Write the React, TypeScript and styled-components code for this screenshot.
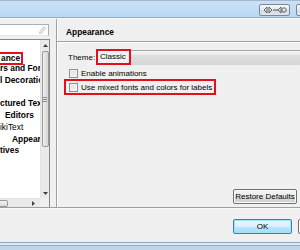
import React from "react";
import styled, { createGlobalStyle } from "styled-components";

const Global = createGlobalStyle`
  html, body { margin: 0; padding: 0; background: #f0f0f0; }
  body { font-family: "Liberation Sans", Arial, sans-serif; font-size: 8px; color: #000; }
`;

const Window = styled.div`
  width: 300px;
  height: 250px;
  overflow: hidden;
  display: flex;
  flex-direction: column;
  background: #f0f0f0;
`;

const TitleBar = styled.div`
  height: 18px;
  flex: none;
  border-top: 1px solid #a6b8cc;
  border-bottom: 1px solid #9aa9b9;
  background: linear-gradient(#c9e1f6, #bcd8f2);
  display: flex;
  justify-content: flex-end;
  align-items: flex-start;
  gap: 6px;
  padding-top: 3px;
  box-sizing: border-box;
  margin-right: -20px;
`;

const CaptionButton = styled.div<{ $w: number }>`
  width: ${(p) => p.$w}px;
  height: 12px;
  box-sizing: border-box;
  border: 1px solid #7d8894;
  border-radius: 2px;
  background: linear-gradient(#f4f7fa 0%, #e4eaf0 50%, #d3dbe4 51%, #dfe6ee 100%);
  display: flex;
  align-items: center;
  justify-content: center;
`;

const TitleGap = styled.div`
  height: 1px;
  flex: none;
  background: #f7f7f7;
`;

const Main = styled.div`
  height: 188px;
  flex: none;
  display: flex;
`;

const LeftPanel = styled.div`
  width: 50px;
  flex: none;
  margin-right: 6px;
  display: flex;
  flex-direction: column;
  padding-top: 5px;
  box-sizing: border-box;
`;

const FilterBox = styled.div`
  height: 12px;
  flex: none;
  box-sizing: border-box;
  border: 1px solid #abadb3;
  border-left: none;
  border-bottom-color: #e3e9ef;
  background: #fff;
  display: flex;
  justify-content: flex-end;
  align-items: center;
  padding-right: 2px;
  margin-right: 1px;
`;

const TreeBox = styled.div`
  flex: 1;
  margin-top: 3px;
  background: #fff;
  border-top: 1px solid #828790;
  border-right: 1px solid #828790;
  display: grid;
  grid-template-columns: 40px 9px;
  grid-template-rows: 1fr 9px;
  overflow: hidden;
`;

const TreeView = styled.div`
  overflow: hidden;
`;

const TreeRow = styled.div<{ $indent: number; $bold?: boolean }>`
  height: 11.7px;
  line-height: 11.7px;
  white-space: nowrap;
  padding-left: ${(p) => p.$indent}px;
  font-weight: ${(p) => (p.$bold === false ? 400 : 700)};
  font-size: 8.4px;
  color: #000;
`;

const Marked = styled.span`
  display: inline-block;
  box-sizing: border-box;
  height: 13px;
  line-height: 9px;
  border: 2px solid #e3101b;
  border-left: none;
  padding: 0 1px;
  vertical-align: top;
`;

const VScroll = styled.div`
  background: #eaeaea;
  border-left: 1px solid #e3e3e3;
  display: flex;
  flex-direction: column;
  align-items: center;
`;

const ArrowCell = styled.div`
  height: 10px;
  width: 100%;
  display: flex;
  align-items: center;
  justify-content: center;
  flex: none;
`;

const Thumb = styled.div<{ $h: number }>`
  height: ${(p) => p.$h}px;
  width: 7px;
  box-sizing: border-box;
  border: 1px solid #9a9a9a;
  border-radius: 2px;
  background: linear-gradient(90deg, #f3f3f3, #e2e2e2 50%, #d6d6d6);
  display: flex;
  align-items: center;
  justify-content: center;
  flex: none;
  margin-top: 1px;
`;

const Spacer = styled.div`
  flex: 1;
`;

const HScroll = styled.div`
  background: #eaeaea;
  border-top: 1px solid #e3e3e3;
  display: flex;
  align-items: center;
`;

const HThumb = styled.div`
  width: 8px;
  height: 7px;
  box-sizing: border-box;
  border: 1px solid #9a9a9a;
  border-left: none;
  border-radius: 0 2px 2px 0;
  background: linear-gradient(#f3f3f3, #d9d9d9);
`;

const Corner = styled.div`
  background: #f0f0f0;
`;

const RightPanel = styled.div`
  flex: 1;
  border-left: 1px solid #a0a0a0;
  box-shadow: inset 1px 0 #ffffff;
  display: flex;
  flex-direction: column;
`;

const Header = styled.div`
  height: 23px;
  flex: none;
  box-sizing: border-box;
  padding: 3px 0 0 9px;
  display: flex;
  align-items: center;
  font-weight: 700;
  font-size: 8.4px;
  border-bottom: 1px solid #a0a0a0;
`;

const HeaderShadow = styled.div`
  height: 1px;
  background: #ffffff;
  flex: none;
`;

const Content = styled.div`
  flex: 1;
  display: flex;
  flex-direction: column;
  padding-left: 7px;
`;

const ThemeRow = styled.div`
  margin-top: 6px;
  height: 16px;
  display: flex;
  align-items: center;
  padding-left: 4px;
`;

const ThemeLabel = styled.span`
  width: 28px;
  flex: none;
`;

const Combo = styled.div`
  flex: 1;
  height: 15px;
  margin-top: 1px;
  box-sizing: border-box;
  border-top: 1px solid #a8a8a8;
  background: linear-gradient(#f4f4f4 0%, #ececec 25%, #dfdfdf 30%, #d6d6d6 100%);
  margin-right: -4px;
  display: flex;
  align-items: flex-start;
`;

const ComboValue = styled.span`
  height: 16px;
  margin-top: -2px;
  box-sizing: border-box;
  border: 2px solid #e3101b;
  background: #f2f2f2;
  padding: 0 3px 0 2px;
  line-height: 12px;
  display: flex;
  align-items: center;
`;

const CheckRow = styled.div`
  height: 11px;
  margin-top: 3px;
  display: flex;
  align-items: center;
  padding-left: 5px;
  gap: 3px;
`;

const MarkedCheckRow = styled.div`
  height: 16px;
  width: fit-content;
  box-sizing: border-box;
  border: 2px solid #e3101b;
  display: flex;
  align-items: center;
  padding: 0 2px 0 3px;
  gap: 3px;
`;

const CheckBox = styled.span`
  width: 9px;
  height: 9px;
  box-sizing: border-box;
  border: 1px solid #8f8f8f;
  background: linear-gradient(135deg, #dcdcdc, #f6f6f6);
  box-shadow: inset 0 0 0 1px #f4f4f4;
  flex: none;
`;

const RestoreRow = styled.div`
  margin-top: auto;
  display: flex;
  justify-content: flex-end;
  padding: 0 3px 3px 0;
`;

const Button = styled.button<{ $w: number; $default?: boolean }>`
  width: ${(p) => p.$w}px;
  height: 15px;
  flex: none;
  box-sizing: border-box;
  padding: 0;
  font-family: "Liberation Sans", Arial, sans-serif;
  font-size: 8px;
  color: #000;
  border-radius: 2px;
  border: 1px solid ${(p) => (p.$default ? "#3c7fb1" : "#707070")};
  background: ${(p) =>
    p.$default
      ? "linear-gradient(#eaf6fd 0%, #d9f0fc 50%, #bee6fd 51%, #a7d9f5 100%)"
      : "linear-gradient(#f2f2f2 0%, #ebebeb 50%, #dddddd 51%, #cfcfcf 100%)"};
  box-shadow: inset 0 0 0 1px ${(p) => (p.$default ? "#a6e2f7" : "#fcfcfc")};
`;

const Separator = styled.div`
  height: 2px;
  flex: none;
  border-top: 1px solid #a0a0a0;
  box-sizing: border-box;
  background: #fafafa;
`;

const ButtonBar = styled.div`
  height: 33px;
  flex: none;
  display: flex;
  justify-content: flex-end;
  gap: 6px;
  padding-top: 10px;
  box-sizing: border-box;
  margin-right: -57px;
`;

const Frame = styled.div`
  height: 7px;
  flex: none;
  border-top: 1px solid #8aa6c1;
  background: linear-gradient(#dbe8f5 0 2px, #8fb0cf 2px 3px, #c2d4e6 3px 100%);
`;

const treeRows: { text: React.ReactNode; indent: number; bold?: boolean }[] = [
  { text: "", indent: 0 },
  { text: <Marked>ance</Marked>, indent: 0 },
  { text: "rs and Fonts", indent: 0 },
  { text: "l Decorations", indent: 0 },
  { text: "", indent: 0 },
  { text: "ctured Text", indent: 0 },
  { text: "Editors", indent: 5 },
  { text: "ikiText", indent: 0, bold: false },
  { text: "Appearance", indent: 12 },
  { text: "tives", indent: 0 },
];

export default function App() {
  return (
    <>
      <Global />
      <Window>
        <TitleBar>
          <CaptionButton $w={31}>
            <svg width="24" height="8" viewBox="0 0 24 8">
              <path d="M4 1 L1 4 L4 7 Z" fill="none" stroke="#555" strokeWidth="0.9" />
              <path d="M6 1 L9 4 L6 7 Z" fill="none" stroke="#555" strokeWidth="0.9" />
              <path d="M10 4 H15" stroke="#555" strokeWidth="1" />
              <path d="M18 1 L15 4 L18 7 Z" fill="none" stroke="#555" strokeWidth="0.9" />
              <circle cx="21" cy="4" r="2.2" fill="none" stroke="#555" strokeWidth="0.9" />
            </svg>
          </CaptionButton>
          <CaptionButton $w={24} />
        </TitleBar>
        <TitleGap />
        <Main>
          <LeftPanel>
            <FilterBox>
              <svg width="7" height="8" viewBox="0 0 7 8">
                <path d="M5 0.5 L6.5 2 L2.5 7 L0.5 7.5 L1 5.5 Z" fill="#f4f4f4" stroke="#b5b5b5" strokeWidth="0.8" />
              </svg>
            </FilterBox>
            <TreeBox>
              <TreeView>
                {treeRows.map((r, i) => (
                  <TreeRow key={i} $indent={r.indent} $bold={r.bold}>
                    {r.text}
                  </TreeRow>
                ))}
              </TreeView>
              <VScroll>
                <ArrowCell>
                  <svg width="5" height="3" viewBox="0 0 5 3">
                    <path d="M0 3 L2.5 0 L5 3 Z" fill="#404040" />
                  </svg>
                </ArrowCell>
                <Thumb $h={96}>
                  <svg width="4" height="5" viewBox="0 0 4 5">
                    <path d="M0 0.5 H4 M0 2.5 H4 M0 4.5 H4" stroke="#8a8a8a" strokeWidth="1" />
                  </svg>
                </Thumb>
                <Spacer />
                <ArrowCell>
                  <svg width="5" height="3" viewBox="0 0 5 3">
                    <path d="M0 0 L2.5 3 L5 0 Z" fill="#404040" />
                  </svg>
                </ArrowCell>
              </VScroll>
              <HScroll>
                <HThumb />
                <Spacer />
                <svg width="3" height="5" viewBox="0 0 3 5" style={{ marginRight: 5 }}>
                  <path d="M0 0 L3 2.5 L0 5 Z" fill="#404040" />
                </svg>
              </HScroll>
              <Corner />
            </TreeBox>
          </LeftPanel>
          <RightPanel>
            <Header>Appearance</Header>
            <HeaderShadow />
            <Content>
              <ThemeRow>
                <ThemeLabel>Theme:</ThemeLabel>
                <Combo>
                  <ComboValue>Classic</ComboValue>
                </Combo>
              </ThemeRow>
              <CheckRow>
                <CheckBox />
                <span>Enable animations</span>
              </CheckRow>
              <MarkedCheckRow>
                <CheckBox />
                <span>Use mixed fonts and colors for labels</span>
              </MarkedCheckRow>
              <RestoreRow>
                <Button $w={64}>Restore Defaults</Button>
              </RestoreRow>
            </Content>
          </RightPanel>
        </Main>
        <Separator />
        <ButtonBar>
          <Button $w={59} $default>OK</Button>
          <Button $w={59}>Cancel</Button>
        </ButtonBar>
        <Frame />
      </Window>
    </>
  );
}
